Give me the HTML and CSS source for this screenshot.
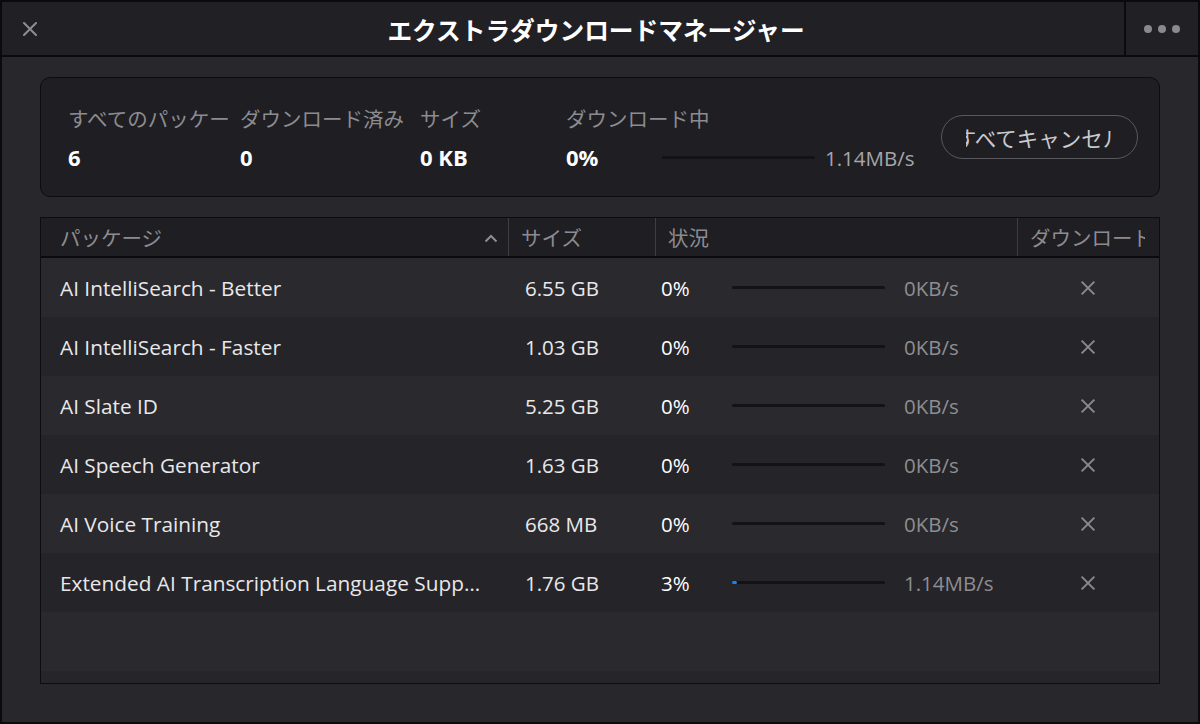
FILE: index.html
```html
<!doctype html>
<html lang="ja">
  <head>
    <meta charset="UTF-8" />
    <title>エクストラダウンロードマネージャー</title>
    <link rel="stylesheet" href="styles.css">
  </head>
  <body>
    <div class="window">
      <!-- Title bar -->
      <div class="titlebar">
        <div class="close-btn">
          <svg width="14" height="14" viewBox="0 0 14 14">
            <path d="M1 1 L13 13 M13 1 L1 13" stroke="#8e8e92" stroke-width="2" stroke-linecap="round" />
          </svg>
        </div>
        <div class="title">エクストラダウンロードマネージャー</div>
        <div class="more-btn">
          <span class="dot"></span><span class="dot"></span><span class="dot"></span>
        </div>
      </div>

      <div class="content">
        <!-- Summary -->
        <div class="summary">
          <div class="stat stat-all">
            <div class="stat-label">すべてのパッケージ</div>
            <div class="stat-value">6</div>
          </div>
          <div class="stat stat-done">
            <div class="stat-label">ダウンロード済み</div>
            <div class="stat-value">0</div>
          </div>
          <div class="stat stat-size">
            <div class="stat-label">サイズ</div>
            <div class="stat-value">0 KB</div>
          </div>
          <div class="stat stat-active">
            <div class="stat-label">ダウンロード中</div>
            <div class="stat-progress">
              <span class="stat-value stat-pct">0%</span>
              <span class="track"></span>
              <span class="summary-speed">1.14MB/s</span>
            </div>
          </div>
          <div class="cancel-btn">
            <div class="cancel-label">すべてキャンセル</div>
          </div>
        </div>

        <!-- Package table -->
        <div class="table">
          <div class="thead">
            <div class="th th-name">
              <span>パッケージ</span>
              <svg class="sort" width="14" height="9" viewBox="0 0 14 9">
                <path d="M1.5 7.5 L7 2 L12.5 7.5" fill="none" stroke="#8e8e92" stroke-width="2" />
              </svg>
            </div>
            <div class="th th-size">サイズ</div>
            <div class="th th-status">状況</div>
            <div class="th th-dl"><span class="th-dl-text">ダウンロード</span></div>
          </div>

          <div class="tbody">
            <div class="row">
              <div class="cell cell-name">AI IntelliSearch - Better</div>
              <div class="cell cell-size">6.55 GB</div>
              <div class="cell cell-status">
                <span class="pct">0%</span><span class="track"></span><span class="speed">0KB/s</span>
              </div>
              <div class="cell cell-dl"><span class="remove"></span></div>
            </div>
            <div class="row">
              <div class="cell cell-name">AI IntelliSearch - Faster</div>
              <div class="cell cell-size">1.03 GB</div>
              <div class="cell cell-status">
                <span class="pct">0%</span><span class="track"></span><span class="speed">0KB/s</span>
              </div>
              <div class="cell cell-dl"><span class="remove"></span></div>
            </div>
            <div class="row">
              <div class="cell cell-name">AI Slate ID</div>
              <div class="cell cell-size">5.25 GB</div>
              <div class="cell cell-status">
                <span class="pct">0%</span><span class="track"></span><span class="speed">0KB/s</span>
              </div>
              <div class="cell cell-dl"><span class="remove"></span></div>
            </div>
            <div class="row">
              <div class="cell cell-name">AI Speech Generator</div>
              <div class="cell cell-size">1.63 GB</div>
              <div class="cell cell-status">
                <span class="pct">0%</span><span class="track"></span><span class="speed">0KB/s</span>
              </div>
              <div class="cell cell-dl"><span class="remove"></span></div>
            </div>
            <div class="row">
              <div class="cell cell-name">AI Voice Training</div>
              <div class="cell cell-size">668 MB</div>
              <div class="cell cell-status">
                <span class="pct">0%</span><span class="track"></span><span class="speed">0KB/s</span>
              </div>
              <div class="cell cell-dl"><span class="remove"></span></div>
            </div>
            <div class="row">
              <div class="cell cell-name">Extended AI Transcription Language Support</div>
              <div class="cell cell-size">1.76 GB</div>
              <div class="cell cell-status">
                <span class="pct">3%</span>
                <span class="track"><span class="fill" style="width: 3%"></span></span>
                <span class="speed">1.14MB/s</span>
              </div>
              <div class="cell cell-dl"><span class="remove"></span></div>
            </div>
            <div class="row row-empty"></div>
          </div>
        </div>
      </div>
    </div>
  </body>
</html>
```

FILE: styles.css
```css
body {
  margin: 0;
  background: #000;
  font-family: 'Open Sans', 'Noto Sans CJK JP', sans-serif;
  font-size: 20.5px;
  color: #e8e8ea;
}

.window {
  width: 1200px;
  height: 724px;
  box-sizing: border-box;
  border: 2px solid #0b0b0c;
  background: #28272c;
  display: flex;
  flex-direction: column;
  overflow: hidden;
}

/* title bar */

.titlebar {
  height: 53px;
  flex-shrink: 0;
  display: flex;
  align-items: center;
  background: #212025;
  border-bottom: 2px solid #0b0b0c;
}

.close-btn {
  width: 66px;
  box-sizing: border-box;
  padding-left: 21px;
  display: flex;
  align-items: center;
}

.title {
  flex: 1;
  text-align: center;
  font-family: 'Noto Sans CJK JP', sans-serif;
  font-size: 24.7px;
  font-weight: bold;
  color: #fff;
}

.more-btn {
  width: 72px;
  height: 100%;
  border-left: 2px solid #0b0b0c;
  display: flex;
  align-items: center;
  justify-content: center;
  gap: 6px;
}

.dot {
  width: 8px;
  height: 8px;
  border-radius: 50%;
  background: #8a8a8e;
}

/* content */

.content {
  flex: 1;
  padding: 20px 38px 0;
  display: flex;
  flex-direction: column;
  gap: 20px;
}

.summary {
  height: 120px;
  box-sizing: border-box;
  border: 1px solid #0d0d0f;
  border-radius: 10px;
  background: #1f1e23;
  display: flex;
  align-items: center;
  padding: 0 21px 0 27px;
}

.stat {
  display: flex;
  flex-direction: column;
  gap: 6px;
  box-sizing: border-box;
  padding-right: 8px;
  margin-top: 2px;
}

.stat-all { width: 172px; padding-right: 12px; }
.stat-done { width: 180px; }
.stat-size { width: 146px; }

.stat-label {
  color: #8c8c90;
  white-space: nowrap;
  overflow: hidden;
  line-height: 32px;
}

.stat-value {
  font-size: 22px;
  font-weight: bold;
  color: #fff;
  line-height: 32px;
}

.stat-progress {
  display: flex;
  align-items: center;
}

.stat-pct {
  width: 96px;
}

.track {
  width: 153px;
  height: 3px;
  background: #131316;
  border-radius: 2px;
  position: relative;
}

.fill {
  display: block;
  height: 100%;
  min-width: 5px;
  background: #1f82e6;
  border-radius: 2px;
}

.summary-speed {
  margin-left: 10px;
  color: #a6a6aa;
  margin-top: 2px;
}

.cancel-btn {
  margin-left: auto;
  width: 197px;
  height: 44px;
  box-sizing: border-box;
  border: 1.5px solid #58585d;
  border-radius: 22px;
  padding: 0 24px;
  display: flex;
  align-items: center;
}

.cancel-label {
  flex: 1;
  display: flex;
  justify-content: center;
  overflow: hidden;
  white-space: nowrap;
  color: #c9c9cc;
  font-size: 21.5px;
}

/* table */

.table {
  height: 467px;
  box-sizing: border-box;
  border: 1px solid #0d0d0f;
  display: flex;
  flex-direction: column;
}

.thead {
  height: 40px;
  box-sizing: border-box;
  flex-shrink: 0;
  display: flex;
  background: #1f1e23;
  border-bottom: 2px solid #0b0b0c;
}

.th {
  display: flex;
  align-items: center;
  box-sizing: border-box;
  padding-left: 12px;
  color: #8c8c90;
  white-space: nowrap;
  overflow: hidden;
}

.th + .th {
  border-left: 1px solid #3e3d43;
}

.th-name {
  width: 467px;
  padding-left: 19px;
  padding-right: 10px;
  justify-content: space-between;
}

.th-size { width: 147px; }
.th-status { width: 362px; }
.th-dl { flex: 1; }

.th-dl-text {
  width: 115px;
  overflow: hidden;
  flex-shrink: 0;
}

.sort {
  margin-top: 2px;
}

.tbody {
  flex: 1;
  background: #26252a;
}

.row {
  height: 59px;
  display: flex;
  align-items: center;
  background: #2a292e;
}

.row:nth-child(even) {
  background: #252429;
}

.cell {
  box-sizing: border-box;
  white-space: nowrap;
  overflow: hidden;
}

.cell-name {
  width: 467px;
  padding: 0 22px 0 19px;
  font-size: 20.8px;
  text-overflow: ellipsis;
}

.cell-size {
  width: 147px;
  padding-left: 17px;
}

.cell-status {
  width: 362px;
  padding-left: 6px;
  display: flex;
  align-items: center;
}

.pct {
  width: 71px;
  color: #fff;
}

.speed {
  margin-left: 19px;
  color: #8e8e92;
}

.cell-dl {
  flex: 1;
  display: flex;
  justify-content: center;
}

.remove {
  width: 16px;
  height: 16px;
  position: relative;
}

.remove::before,
.remove::after {
  content: '';
  position: absolute;
  left: -1px;
  top: 7px;
  width: 18px;
  height: 2px;
  background: #8a8a8e;
  transform: rotate(45deg);
}

.remove::after {
  transform: rotate(-45deg);
}
```
